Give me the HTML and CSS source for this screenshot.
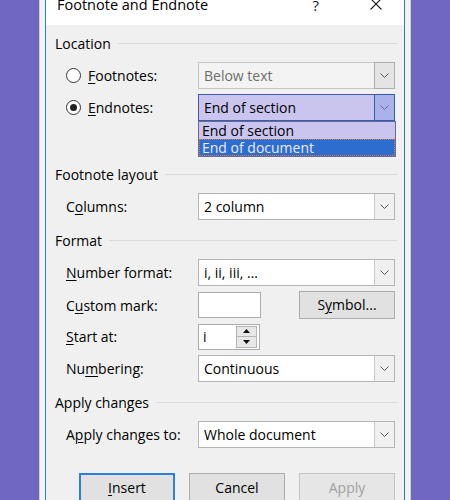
FILE: index.html
```html
<!DOCTYPE html>
<html>
<head>
<meta charset="utf-8">
<link rel="stylesheet" href="styles.css">
</head>
<body>
<div class="frame">
  <div class="dialog">
    <div class="titlebar">
      <span class="title">Footnote and Endnote</span>
      <span class="help">?</span>
      <svg class="close" width="12" height="12" viewBox="0 0 12 12"><path d="M0.5 0.5 L11.5 11.5 M11.5 0.5 L0.5 11.5" stroke="#1a1a1a" stroke-width="1.1" fill="none"/></svg>
    </div>
    <div class="content">
      <section class="group">
        <div class="heading"><span>Location</span><i class="rule"></i></div>
        <div class="rows rows-location">
          <div class="row">
            <label class="radio-label"><span class="radio"></span><span><u>F</u>ootnotes:</span></label>
            <div class="combo disabled">
              <span class="value">Below text</span>
              <span class="drop"><svg width="9" height="5" viewBox="0 0 9 5"><path d="M0.5 0.5 L4.5 4.5 L8.5 0.5" stroke="#555" fill="none"/></svg></span>
            </div>
          </div>
          <div class="row">
            <label class="radio-label"><span class="radio checked"></span><span><u>E</u>ndnotes:</span></label>
            <div class="combo open">
              <span class="value">End of section</span>
              <span class="drop"><svg width="9" height="5" viewBox="0 0 9 5"><path d="M0.5 0.5 L4.5 4.5 L8.5 0.5" stroke="#6a64a8" fill="none"/></svg></span>
              <div class="list">
                <div class="item">End of section</div>
                <div class="item selected">End of document</div>
              </div>
            </div>
          </div>
        </div>
      </section>

      <section class="group">
        <div class="heading"><span>Footnote layout</span><i class="rule"></i></div>
        <div class="rows">
          <div class="row">
            <span class="label">C<u>o</u>lumns:</span>
            <div class="combo">
              <span class="value">2 column</span>
              <span class="drop"><svg width="9" height="5" viewBox="0 0 9 5"><path d="M0.5 0.5 L4.5 4.5 L8.5 0.5" stroke="#555" fill="none"/></svg></span>
            </div>
          </div>
        </div>
      </section>

      <section class="group">
        <div class="heading"><span>Format</span><i class="rule"></i></div>
        <div class="rows">
          <div class="row">
            <span class="label"><u>N</u>umber format:</span>
            <div class="combo">
              <span class="value">i, ii, iii, …</span>
              <span class="drop"><svg width="9" height="5" viewBox="0 0 9 5"><path d="M0.5 0.5 L4.5 4.5 L8.5 0.5" stroke="#555" fill="none"/></svg></span>
            </div>
          </div>
          <div class="row">
            <span class="label">C<u>u</u>stom mark:</span>
            <div class="field-line">
              <span class="textbox"></span>
              <span class="button symbol">S<u>y</u>mbol...</span>
            </div>
          </div>
          <div class="row">
            <span class="label"><u>S</u>tart at:</span>
            <div class="field-line">
              <span class="spinbox">
                <span class="value">i</span>
                <span class="spin">
                  <span class="spin-btn"><svg width="7" height="4" viewBox="0 0 7 4"><path d="M0 4 L3.5 0 L7 4 Z" fill="#111"/></svg></span>
                  <span class="spin-btn"><svg width="7" height="4" viewBox="0 0 7 4"><path d="M0 0 L3.5 4 L7 0 Z" fill="#111"/></svg></span>
                </span>
              </span>
            </div>
          </div>
          <div class="row">
            <span class="label">Nu<u>m</u>bering:</span>
            <div class="combo">
              <span class="value">Continuous</span>
              <span class="drop"><svg width="9" height="5" viewBox="0 0 9 5"><path d="M0.5 0.5 L4.5 4.5 L8.5 0.5" stroke="#555" fill="none"/></svg></span>
            </div>
          </div>
        </div>
      </section>

      <section class="group">
        <div class="heading"><span>Apply changes</span><i class="rule"></i></div>
        <div class="rows">
          <div class="row">
            <span class="label">A<u>p</u>ply changes to:</span>
            <div class="combo">
              <span class="value">Whole document</span>
              <span class="drop"><svg width="9" height="5" viewBox="0 0 9 5"><path d="M0.5 0.5 L4.5 4.5 L8.5 0.5" stroke="#555" fill="none"/></svg></span>
            </div>
          </div>
        </div>
      </section>

      <div class="buttons">
        <span class="button default"><u>I</u>nsert</span>
        <span class="button">Cancel</span>
        <span class="button inactive">Apply</span>
      </div>
    </div>
  </div>
</div>
</body>
</html>
```

FILE: styles.css
```css
html, body {
  margin: 0;
  padding: 0;
  background: #6f67c1;
  height: 500px;
  overflow: hidden;
}

body {
  font-family: "Open Sans", "Noto Sans", "DejaVu Sans", sans-serif;
  font-size: 14px;
  color: #000;
}

u {
  text-decoration: underline;
  text-underline-offset: 2px;
  text-decoration-thickness: 1px;
}

.frame {
  margin-left: 39px;
  width: 370px;
  height: 520px;
  background: #f3f3f3;
  border-left: 1px solid #cfcfcf;
  border-right: 1px solid #cfcfcf;
  padding: 0 5px;
  box-sizing: content-box;
  width: 360px;
}

.dialog {
  height: 100%;
  border-left: 1px solid #2b7cd3;
  border-right: 1px solid #2b7cd3;
  background: #f0f0f0;
}

.titlebar {
  height: 25px;
  background: #fff;
  display: flex;
  align-items: flex-start;
  padding-left: 11px;
  overflow: hidden;
}

.title {
  flex: 1;
  font-size: 14.5px;
  line-height: 20px;
  margin-top: -5px;
}

.help {
  font-size: 15px;
  line-height: 20px;
  margin-top: -5px;
  margin-right: 51px;
  color: #1a1a1a;
}

.close {
  margin-top: -2px;
  margin-right: 22px;
}

.content {
  padding: 9px 7px 0 9px;
}

.group + .group {
  margin-top: 11px;
}

.heading {
  height: 20px;
  display: flex;
  align-items: center;
  line-height: 20px;
}

.rule {
  flex: 1;
  height: 1px;
  background: #dadada;
  margin-left: 7px;
  margin-top: -1px;
}

.rows {
  padding: 8px 2px 0 11px;
  display: flex;
  flex-direction: column;
  gap: 5px;
}

.rows-location {
  padding-bottom: 33px;
}

.row {
  height: 27px;
  display: grid;
  grid-template-columns: 132px 1fr;
  align-items: center;
}

.radio-label {
  display: flex;
  align-items: center;
  gap: 7px;
}

.radio {
  width: 15px;
  height: 15px;
  box-sizing: border-box;
  border: 1px solid #333;
  border-radius: 50%;
  background: #fff;
  display: flex;
  align-items: center;
  justify-content: center;
}

.radio.checked::after {
  content: "";
  width: 7px;
  height: 7px;
  border-radius: 50%;
  background: #222;
}

.combo {
  position: relative;
  height: 27px;
  box-sizing: border-box;
  border: 1px solid #b4b4b4;
  background: #fff;
  display: flex;
  align-items: stretch;
}

.combo .value {
  flex: 1;
  padding-left: 5px;
  line-height: 25px;
  white-space: nowrap;
}

.combo .drop {
  width: 20px;
  box-sizing: border-box;
  border-left: 1px solid #c8c8c8;
  background: #f0f0f0;
  display: flex;
  align-items: center;
  justify-content: center;
}

.combo.disabled {
  border-color: #c6c6c6;
  background: #f3f3f3;
}

.combo.disabled .value {
  color: #6d6d6d;
}

.combo.disabled .drop {
  border: 1px solid #adadad;
  background: #e4e4e4;
  margin: -1px -1px -1px 0;
  width: 21px;
}

.combo.open {
  border-color: #3e5ba6;
  background: #c9c5ee;
}

.combo.open .drop {
  border: 1px solid #2e5cb1;
  background: #aab2ea;
  margin: -1px -1px -1px 0;
  width: 21px;
}

.list {
  position: absolute;
  top: 26px;
  left: -1px;
  right: -2px;
  box-sizing: border-box;
  border: 1px solid #6a6896;
  background: #c9c5ee;
  z-index: 2;
}

.item {
  height: 17px;
  line-height: 17px;
  padding-left: 3px;
  white-space: nowrap;
}

.item.selected {
  background: #2d6dcf;
  color: #eceaff;
  outline: 1px dotted #d9823c;
  outline-offset: -1px;
}

.field-line {
  display: flex;
  align-items: center;
}

.textbox {
  width: 63px;
  height: 26px;
  box-sizing: border-box;
  border: 1px solid #acacac;
  background: #fff;
}

.button {
  width: 96px;
  height: 28px;
  box-sizing: border-box;
  border: 1px solid #adadad;
  background: #e1e1e1;
  display: flex;
  align-items: center;
  justify-content: center;
  line-height: 20px;
}

.symbol {
  margin-left: auto;
  height: 28px;
}

.spinbox {
  width: 62px;
  height: 26px;
  box-sizing: border-box;
  border: 1px solid #acacac;
  background: #fff;
  display: flex;
  align-items: stretch;
}

.spinbox .value {
  flex: 1;
  padding-left: 4px;
  line-height: 24px;
}

.spin {
  width: 21px;
  display: flex;
  flex-direction: column;
  padding: 1px 2px 1px 0;
  gap: 0;
}

.spin-btn {
  flex: 1;
  box-sizing: border-box;
  border: 1px solid #b4b4b4;
  background: #e8e8e8;
  display: flex;
  align-items: center;
  justify-content: center;
}

.spin-btn + .spin-btn {
  border-top: none;
}

.buttons {
  margin-top: 25px;
  padding-right: 2px;
  display: flex;
  justify-content: flex-end;
  gap: 14px;
}

.buttons .button {
  height: 30px;
}

.button.default {
  border: 2px solid #2a7fd6;
}

.button.inactive {
  border-color: #c4c4c4;
  background: #e6e6e6;
  color: #a0a0a0;
}
```
